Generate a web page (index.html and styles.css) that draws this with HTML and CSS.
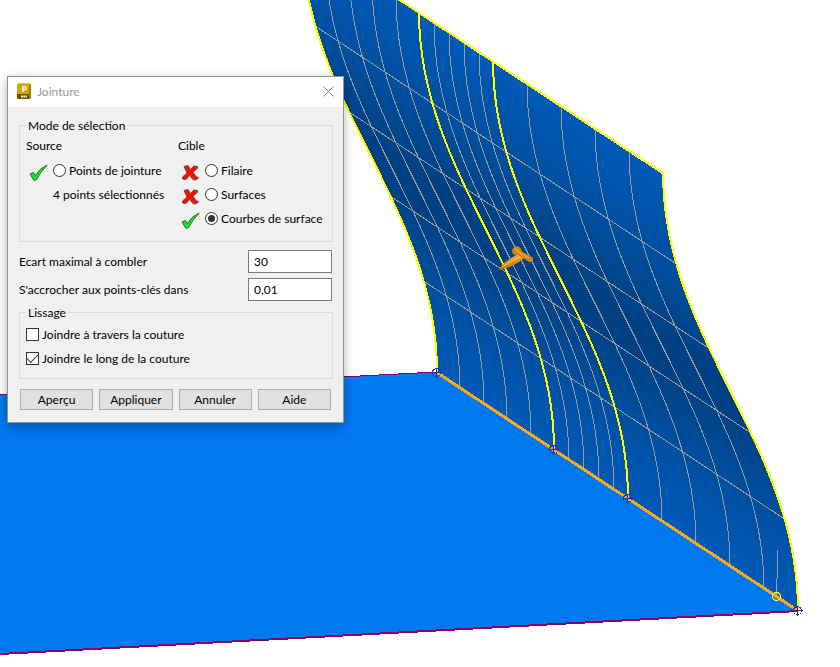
FILE: index.html
```html
<!DOCTYPE html>
<html lang="fr">
<head>
<meta charset="utf-8">
<title>Jointure</title>
<link rel="stylesheet" href="styles.css">
</head>
<body>
<main class="workspace">
  <svg class="scene" viewBox="0 0 840 667" preserveAspectRatio="xMinYMin slice" aria-hidden="true">
    <defs>
      <linearGradient id="shade" gradientUnits="userSpaceOnUse" x1="662" y1="173" x2="502" y2="415">
        <stop offset="0" stop-color="#005ab8"/>
        <stop offset="0.25" stop-color="#004f9f"/>
        <stop offset="0.46" stop-color="#004183"/>
        <stop offset="0.56" stop-color="#004183"/>
        <stop offset="0.78" stop-color="#0050a2"/>
        <stop offset="1" stop-color="#005ab8"/>
      </linearGradient>
      <linearGradient id="brass" x1="0" y1="0" x2="0" y2="1">
        <stop offset="0" stop-color="#f8b030"/>
        <stop offset="1" stop-color="#c07808"/>
      </linearGradient>
      <path id="profile" d="M0 0C0-167-135-270-135-437"/>
      <g id="node"><circle r="4"/><path d="M-5 0H5M0-5V5"/></g>
    </defs>
    <path class="plane" d="M0 395L436 372L798 610L0 653Z"/>
    <path class="seam" d="M0 395L436 372"/>
    <path class="seam thick" d="M0 654L798 611"/>
    <path class="sheet" d="M437 372C437 205 302 102 302-63L662 174C663 340 798 443 798 610Z"/>
    <g class="iso">
      <use href="#profile" x="460" y="388"/><use href="#profile" x="484" y="403"/>
      <use href="#profile" x="507" y="419"/><use href="#profile" x="531" y="434"/>
      <use href="#profile" x="569" y="460"/><use href="#profile" x="584" y="469"/>
      <use href="#profile" x="599" y="479"/><use href="#profile" x="614" y="489"/>
      <use href="#profile" x="662" y="521"/><use href="#profile" x="696" y="543"/>
      <use href="#profile" x="730" y="565"/><use href="#profile" x="764" y="588"/>
      <path d="M315 26L675 263M349 112L710 349M390 196L751 433M422 280L783 518"/>
      <path d="M777.500 550V560L776.500 596"/>
    </g>
    <g class="edge">
      <use href="#profile" x="437" y="372"/><use href="#profile" x="554" y="449"/>
      <use href="#profile" x="628" y="498"/><use href="#profile" x="798" y="610"/>
      <path d="M398-1L663 173"/>
    </g>
    <path class="joint" d="M436 372L797 610"/>
    <g class="nodes">
      <use href="#node" x="436.500" y="372.500"/><use href="#node" x="553.500" y="449.500"/>
      <use href="#node" x="627.500" y="498.500"/><use href="#node" x="797.500" y="610.500"/>
    </g>
    <circle class="handle" cx="776.500" cy="596.500" r="4"/>
    <g shape-rendering="geometricPrecision">
      <path d="M498 270L504 263L511 258L520 253L525 257L519 262L510 267Z" fill="url(#brass)"/>
      <path d="M502 267L510 262L520 256.500" fill="none" stroke="#ffc850"/>
      <path d="M516.500 246Q512 247 512 252Q513 255.500 518 255L529 262L533 260.500L532.500 257.500L522 251.500Q521 246.500 516.500 246Z" fill="#cf8510"/>
      <path d="M515 248.500L520 253L529 258" fill="none" stroke="#eda020" stroke-width="2"/>
      <ellipse cx="531" cy="259.500" rx="2" ry="2.500" fill="#c28a35"/>
    </g>
  </svg>

  <form class="dialog" aria-labelledby="dialog-title">
    <header class="titlebar">
      <svg class="app-icon" viewBox="0 0 15 17" aria-hidden="true">
        <path d="M2 0H13L14 1V15L12 16H1L0 15V2Z" fill="#d5a500"/>
        <path d="M2 0H13L14 1H1Z" fill="#ebc83a"/>
        <path d="M0 11H12L14 10V15L12 16H1L0 15Z" fill="#695000"/>
        <path d="M12 1L14 2V14L12 15Z" fill="#a67d00"/>
        <path d="M4 13.500H10" stroke="#f5edcf" stroke-width="2" stroke-dasharray="2 .4"/>
        <text class="app-letter" x="4.500" y="9">P</text>
      </svg>
      <h1 class="title" id="dialog-title">Jointure</h1>
      <button class="close" type="button" aria-label="Fermer">
        <svg viewBox="0 0 11 11"><path d="M.5.5l10 10M10.500.5l-10 10" fill="none" stroke="#888"/></svg>
      </button>
    </header>
    <svg class="symbols" aria-hidden="true">
      <symbol id="ok" viewBox="0 0 19 18"><path d="M1 10L4.500 8.500L6.500 11.500Q10 5 17.500 1L18 1.500Q12 7 7.500 15.500L5 16.500Z" fill="#08f018" stroke="#3b6540"/></symbol>
      <symbol id="ko" viewBox="0 0 19 18"><path d="M3 2.500L7 1.500L9.500 5.500L13 2L16.500 2.500V4L12 8.500L15.500 13L17.500 13.500L16 15.500L12.500 16L8.500 11.500L5 15.500L1.500 15L1.500 13L6 9Z" fill="#fa0b06" stroke="#704848"/></symbol>
    </svg>
    <div class="body">
      <fieldset class="group selection">
        <legend>Mode de sélection</legend>
        <div class="columns">
          <div>
            <div class="heading">Source</div>
            <div class="choice"><svg class="state"><use href="#ok"/></svg><input type="radio" name="source" id="points"><label for="points">Points de jointure</label></div>
            <div class="choice count">4 points sélectionnés</div>
          </div>
          <div>
            <div class="heading">Cible</div>
            <div class="choice"><svg class="state"><use href="#ko"/></svg><input type="radio" name="target" id="wire"><label for="wire">Filaire</label></div>
            <div class="choice"><svg class="state"><use href="#ko"/></svg><input type="radio" name="target" id="surfaces"><label for="surfaces">Surfaces</label></div>
            <div class="choice"><svg class="state"><use href="#ok"/></svg><input type="radio" name="target" id="curves" checked><label for="curves">Courbes de surface</label></div>
          </div>
        </div>
      </fieldset>
      <div class="fields">
        <div class="field"><label for="gap">Ecart maximal à combler</label><input type="text" id="gap" value="30"></div>
        <div class="field"><label for="snap">S'accrocher aux points-clés dans</label><input type="text" id="snap" value="0,01"></div>
      </div>
      <fieldset class="group smoothing">
        <legend>Lissage</legend>
        <div class="choice"><input type="checkbox" id="across"><label for="across">Joindre à travers la couture</label></div>
        <div class="choice"><input type="checkbox" id="along" checked><label for="along">Joindre le long de la couture</label></div>
      </fieldset>
      <div class="actions">
        <button type="button">Aperçu</button>
        <button type="button">Appliquer</button>
        <button type="button">Annuler</button>
        <button type="button">Aide</button>
      </div>
    </div>
  </form>
</main>
</body>
</html>
```
FILE: styles.css
```css
* { box-sizing: border-box; }
body {
  margin: 0;
  background: #fff;
  color: #000;
  font: 12px/17px Lato, "Noto Sans", sans-serif;
}
input, button { font: inherit; color: inherit; margin: 0; }

.workspace { position: relative; min-height: 100vh; overflow: hidden; }
.scene { position: absolute; inset: 0; width: 100%; height: 100%; shape-rendering: crispEdges; }
.plane { fill: #0078f0; }
.seam { fill: none; stroke: #900060; }
.thick { stroke-width: 2; }
.sheet { fill: url(#shade); }
.iso { fill: none; stroke: #9c9c9c; }
.edge { fill: none; stroke: #ffff00; stroke-width: 2; }
.joint { fill: none; stroke: #ffa818; stroke-width: 3; }
.nodes { fill: none; stroke: #3024b0; }
.handle { fill: none; stroke: #ffff00; shape-rendering: geometricPrecision; stroke-width: 1.3; }

.dialog {
  position: absolute;
  left: 7px;
  top: 76px;
  width: 337px;
  background: #f0f0f0;
  border: 1px solid #8f9296;
  box-shadow: 0 3px 10px rgba(0, 0, 0, .3);
}
.titlebar {
  display: flex;
  align-items: center;
  gap: 5px;
  height: 30px;
  padding: 0 9px 2px;
  background: #fff;
}
.app-icon { width: 15px; height: 17px; }
.app-letter { font: bold 9px "Open Sans", sans-serif; fill: #fff; }
.title { flex: 1; margin: 0; font-size: 12px; font-weight: 400; color: #999; }
.close { display: flex; padding: 0; border: 0; background: none; }
.close svg { width: 11px; height: 11px; }
.symbols { position: absolute; width: 0; height: 0; }

.body { padding: 10px 10px 12px 11px; }
.group { margin: 0; min-width: 0; border: 1px solid #dcdcdc; }
.group legend { padding: 0 2px; height: 17px; }
.selection { padding: 0 6px 11px; }
.smoothing { padding: 1px 6px 8px; margin-top: 3px; }
.columns { display: grid; grid-template-columns: 152px 1fr; }
.heading { height: 24px; line-height: 24px; }
.choice { display: flex; align-items: center; gap: 3px; height: 24px; white-space: nowrap; }
.count { padding-left: 27px; }
.state { width: 19px; height: 18px; margin: 6px 2px 0 3px; }

input[type="radio"], input[type="checkbox"] {
  appearance: none;
  display: grid;
  place-items: center;
  width: 13px;
  height: 13px;
  border: 1px solid #333;
  background: #fff;
}
input[type="radio"] { border-radius: 50%; }
input[type="radio"]:checked::before {
  content: "";
  width: 7px;
  height: 7px;
  border-radius: 50%;
  background: #333;
}
input[type="checkbox"]:checked::before {
  content: "";
  width: 10px;
  height: 5px;
  border: solid #444;
  border-width: 0 0 1px 1px;
  transform: translateY(-1px) rotate(-45deg);
}

.fields { display: grid; gap: 5px; padding: 8px 1px 0 0; }
.field { display: flex; align-items: center; justify-content: space-between; }
.field input { width: 84px; height: 23px; padding: 0 5px 1px; border: 1px solid #7a7a7a; background: #fff; }
.actions { display: grid; grid-template-columns: repeat(4, 1fr); gap: 6px; margin-top: 10px; padding: 0 2px 0 1px; }
.actions button { height: 21px; padding: 0; border: 1px solid #adadad; background: #e1e1e1; line-height: 17px; }
```
